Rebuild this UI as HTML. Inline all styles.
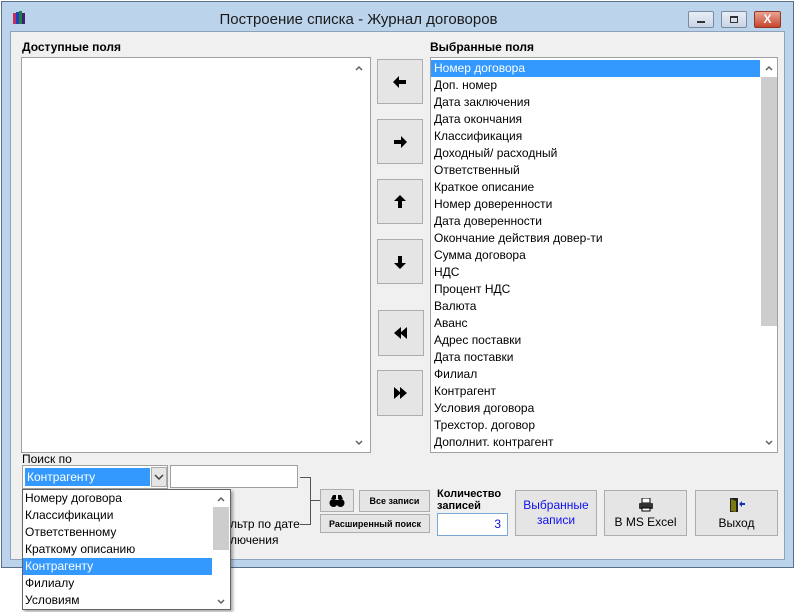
<!DOCTYPE html>
<html><head><meta charset="utf-8"><style>
*{box-sizing:border-box}
body{margin:0;width:799px;height:612px;background:#fff;position:relative;overflow:hidden;font-family:"Liberation Sans",Arial,sans-serif;font-size:12px;color:#000}
.a{position:absolute}
.win{left:1px;top:1px;width:793px;height:567px;background:#bcd3ec;border:1px solid #5a6f88}
.client{left:10px;top:31px;width:775px;height:529px;background:#f0f0f0;border:1px solid #8da2bb}
.box{background:#fff;border:1px solid #a0a0a0}
.btn{background:#e5e5e5;border:1px solid #adadad;display:flex;align-items:center;justify-content:center;text-align:center}
.row{position:absolute;left:3px;height:17px;line-height:17px;white-space:nowrap}
.lbl{font-weight:bold;font-size:12px}
.cap{width:26px;height:17px;border:1px solid #7a8aa0;border-radius:2px;background:linear-gradient(#e9eef6,#c9d4e4)}
.chev{position:absolute;width:12px;height:8px}
</style></head><body>
<div class="a win"></div>
<div class="a" style="left:12px;top:10px;width:14px;height:14px">
<svg width="14" height="14"><rect x="1" y="3" width="3" height="11" fill="#c03060"/><rect x="4" y="2" width="3" height="12" fill="#2040c0"/><rect x="7" y="1" width="3" height="13" fill="#208040"/><rect x="10" y="3" width="3" height="11" fill="#402070"/></svg></div>
<div class="a" style="left:0;width:717px;top:11px;text-align:center;font-size:15px;color:#1a1a1a">Построение списка - Журнал договоров</div>
<div class="a cap" style="left:688px;top:11px"><div class="a" style="left:8px;top:9px;width:8px;height:2px;background:#333"></div></div>
<div class="a cap" style="left:721px;top:11px"><div class="a" style="left:8px;top:4px;width:8px;height:7px;border:1px solid #333;border-top-width:2px"></div></div>
<div class="a" style="left:754px;top:11px;width:27px;height:17px;border:1px solid #8b3a2a;border-radius:2px;background:linear-gradient(#e8a494,#c7442d);color:#fff;font-weight:bold;font-size:12px;text-align:center;line-height:15px">X</div>
<div class="a client"></div>

<div class="a lbl" style="left:22px;top:40px">Доступные поля</div>
<div class="a lbl" style="left:430px;top:40px">Выбранные поля</div>

<div class="a box" style="left:21px;top:57px;width:350px;height:396px"></div>
<svg class="chev" style="left:353px;top:64px"><path d="M3 6 L6 3 L9 6" fill="none" stroke="#606060" stroke-width="1.5"/></svg>
<svg class="chev" style="left:353px;top:438px"><path d="M3 3 L6 6 L9 3" fill="none" stroke="#606060" stroke-width="1.5"/></svg>

<div class="a btn" style="left:377px;top:59px;width:46px;height:45px"><svg width="14" height="12"><path d="M0 6 L6 0 L6 4 L13 4 L13 8 L6 8 L6 12 Z" fill="#000"/></svg></div>
<div class="a btn" style="left:377px;top:119px;width:46px;height:45px"><svg width="14" height="12"><path d="M14 6 L8 0 L8 4 L1 4 L1 8 L8 8 L8 12 Z" fill="#000"/></svg></div>
<div class="a btn" style="left:377px;top:179px;width:46px;height:45px"><svg width="12" height="14"><path d="M6 0 L0 6 L4 6 L4 13 L8 13 L8 6 L12 6 Z" fill="#000"/></svg></div>
<div class="a btn" style="left:377px;top:239px;width:46px;height:45px"><svg width="12" height="14"><path d="M6 14 L0 8 L4 8 L4 1 L8 1 L8 8 L12 8 Z" fill="#000"/></svg></div>
<div class="a btn" style="left:378px;top:310px;width:46px;height:46px"><svg width="14" height="12"><path d="M0 6 L7 0 L7 12 Z M6 6 L13 0 L13 12 Z" fill="#000"/></svg></div>
<div class="a btn" style="left:377px;top:370px;width:46px;height:46px"><svg width="14" height="12"><path d="M14 6 L7 0 L7 12 Z M8 6 L1 0 L1 12 Z" fill="#000"/></svg></div>

<div class="a box" style="left:430px;top:57px;width:348px;height:396px;font-size:12px">
<div class="a" style="left:0;top:2px;width:329px;height:17px;background:#3399ff"></div>
<div class="a" style="left:330px;top:19px;width:16px;height:249px;background:#cdcdcd"></div>
<svg class="chev" style="left:332px;top:6px"><path d="M3 6 L6 3 L9 6" fill="none" stroke="#606060" stroke-width="1.5"/></svg>
<svg class="chev" style="left:332px;top:380px"><path d="M3 3 L6 6 L9 3" fill="none" stroke="#606060" stroke-width="1.5"/></svg>
<div class="row" style="top:2px;color:#fff">Номер договора</div>
<div class="row" style="top:19px">Доп. номер</div>
<div class="row" style="top:36px">Дата заключения</div>
<div class="row" style="top:53px">Дата окончания</div>
<div class="row" style="top:70px">Классификация</div>
<div class="row" style="top:87px">Доходный/ расходный</div>
<div class="row" style="top:104px">Ответственный</div>
<div class="row" style="top:121px">Краткое описание</div>
<div class="row" style="top:138px">Номер доверенности</div>
<div class="row" style="top:155px">Дата доверенности</div>
<div class="row" style="top:172px">Окончание действия довер-ти</div>
<div class="row" style="top:189px">Сумма договора</div>
<div class="row" style="top:206px">НДС</div>
<div class="row" style="top:223px">Процент НДС</div>
<div class="row" style="top:240px">Валюта</div>
<div class="row" style="top:257px">Аванс</div>
<div class="row" style="top:274px">Адрес поставки</div>
<div class="row" style="top:291px">Дата поставки</div>
<div class="row" style="top:308px">Филиал</div>
<div class="row" style="top:325px">Контрагент</div>
<div class="row" style="top:342px">Условия договора</div>
<div class="row" style="top:359px">Трехстор. договор</div>
<div class="row" style="top:376px">Дополнит. контрагент</div>
</div>

<div class="a" style="left:22px;top:452px">Поиск по</div>
<div class="a box" style="left:22px;top:465px;width:146px;height:24px">
<div class="a" style="left:2px;top:2px;width:125px;height:18px;background:#3399ff;color:#fff;line-height:18px;padding-left:2px">Контрагенту</div>
<div class="a" style="left:128px;top:1px;width:16px;height:20px;background:#e5e5e5;border:1px solid #adadad"><svg width="14" height="18"><path d="M3 7 L7 11 L11 7" fill="none" stroke="#404040" stroke-width="1.5"/></svg></div>
</div>
<div class="a box" style="left:170px;top:465px;width:128px;height:23px"></div>
<div class="a" style="left:300px;top:477px;width:11px;height:48px;border:1px solid #555;border-left:none"></div>
<div class="a" style="left:311px;top:500px;width:9px;height:1px;background:#555"></div>
<div class="a" style="left:230px;top:516px;font-size:12px;line-height:16px">льтр по дате<br>лючения</div>

<div class="a btn" style="left:320px;top:489px;width:34px;height:23px"><svg width="16" height="14"><path d="M2 5 L4 1 L7 1 L7 5 L9 5 L9 1 L12 1 L14 5 Z" fill="#000"/><circle cx="4.5" cy="9" r="4" fill="#000"/><circle cx="11.5" cy="9" r="4" fill="#000"/><rect x="6" y="6" width="4" height="4" fill="#000"/></svg></div>
<div class="a btn" style="left:359px;top:490px;width:71px;height:22px;font-size:9px;font-weight:bold">Все записи</div>
<div class="a btn" style="left:320px;top:514px;width:110px;height:19px;font-size:9px;font-weight:bold">Расширенный поиск</div>

<div class="a" style="left:22px;top:489px;width:209px;height:121px;background:#fff;border:1px solid #646464;box-shadow:2px 2px 3px rgba(0,0,0,.35);font-size:12px">
<div class="a" style="left:190px;top:17px;width:16px;height:43px;background:#cdcdcd"></div>
<svg class="chev" style="left:192px;top:5px"><path d="M3 6 L6 3 L9 6" fill="none" stroke="#606060" stroke-width="1.5"/></svg>
<svg class="chev" style="left:192px;top:107px"><path d="M3 3 L6 6 L9 3" fill="none" stroke="#606060" stroke-width="1.5"/></svg>
<div class="a" style="left:0;top:68px;width:189px;height:17px;background:#3399ff"></div>
<div class="row" style="left:2px;top:0">Номеру договора</div>
<div class="row" style="left:2px;top:17px">Классификации</div>
<div class="row" style="left:2px;top:34px">Ответственному</div>
<div class="row" style="left:2px;top:51px">Краткому описанию</div>
<div class="row" style="left:2px;top:68px;color:#fff">Контрагенту</div>
<div class="row" style="left:2px;top:85px">Филиалу</div>
<div class="row" style="left:2px;top:102px">Условиям</div>
</div>

<div class="a lbl" style="left:437px;top:488px;font-size:11px;line-height:12px">Количество<br>записей</div>
<div class="a" style="left:437px;top:513px;width:71px;height:23px;background:#fff;border:1px solid #7aa7d6;color:#1010d0;text-align:right;padding-right:6px;line-height:21px">3</div>
<div class="a btn" style="left:515px;top:490px;width:82px;height:46px;color:#1010ee;font-size:12px;line-height:15px">Выбранные<br>записи</div>
<div class="a btn" style="left:604px;top:490px;width:83px;height:46px;flex-direction:column;font-size:12px"><svg width="16" height="14" style="margin-bottom:3px"><rect x="4" y="0" width="8" height="5" fill="#fff" stroke="#000"/><rect x="1" y="5" width="14" height="6" rx="1" fill="#333"/><rect x="4" y="10" width="8" height="3" fill="#fff" stroke="#000"/></svg>В MS Excel</div>
<div class="a btn" style="left:695px;top:490px;width:83px;height:46px;flex-direction:column;font-size:12px"><svg width="16" height="16" style="margin-bottom:3px"><rect x="1" y="1" width="8" height="14" fill="#222"/><path d="M2 2 L7 4 L7 15 L2 14 Z" fill="#7a7a10"/><path d="M10 7 L13 4 L13 6 L16 6 L16 8 L13 8 L13 10 Z" fill="#1030c0"/></svg>Выход</div>
</body></html>
